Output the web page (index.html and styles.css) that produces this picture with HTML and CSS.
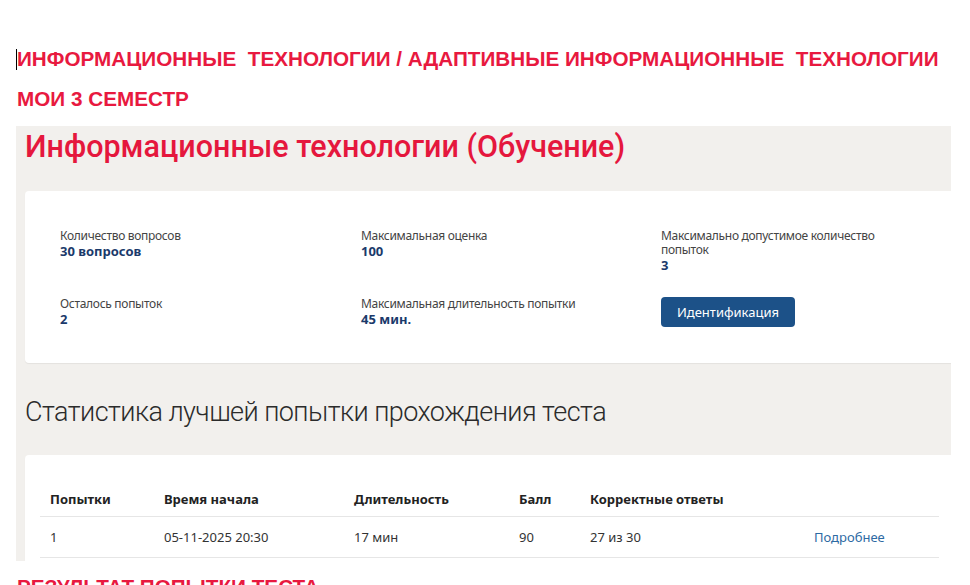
FILE: index.html
```html
<!DOCTYPE html>
<html lang="ru">
<head>
    <meta charset="UTF-8">
    <meta name="viewport" content="width=device-width, initial-scale=1.0">
    <title>Информационные технологии (Обучение)</title>
    <link rel="stylesheet" href="styles.css">
</head>
<body>
    <div class="crumbs">
        <div class="crumb-line"><span class="caret"></span>ИНФОРМАЦИОННЫЕ&nbsp; ТЕХНОЛОГИИ / АДАПТИВНЫЕ ИНФОРМАЦИОННЫЕ&nbsp; ТЕХНОЛОГИИ</div>
        <div class="crumb-line">МОИ 3 СЕМЕСТР</div>
    </div>

    <div class="quiz-panel">
        <h1 class="quiz-title">Информационные технологии (Обучение)</h1>

        <div class="card info-card">
            <div class="info-grid">
                <div class="info-item">
                    <div class="info-label">Количество вопросов</div>
                    <div class="info-value">30 вопросов</div>
                </div>
                <div class="info-item">
                    <div class="info-label">Максимальная оценка</div>
                    <div class="info-value">100</div>
                </div>
                <div class="info-item">
                    <div class="info-label">Максимально допустимое количество попыток</div>
                    <div class="info-value">3</div>
                </div>
                <div class="info-item">
                    <div class="info-label">Осталось попыток</div>
                    <div class="info-value">2</div>
                </div>
                <div class="info-item">
                    <div class="info-label">Максимальная длительность попытки</div>
                    <div class="info-value">45 мин.</div>
                </div>
                <div class="info-item">
                    <button class="btn-primary" type="button">Идентификация</button>
                </div>
            </div>
        </div>

        <h2 class="section-title">Статистика лучшей попытки прохождения теста</h2>

        <div class="card table-card">
            <table class="attempts">
                <thead>
                    <tr>
                        <th class="col-num">Попытки</th>
                        <th class="col-start">Время начала</th>
                        <th class="col-dur">Длительность</th>
                        <th class="col-score">Балл</th>
                        <th class="col-correct">Корректные ответы</th>
                        <th></th>
                    </tr>
                </thead>
                <tbody>
                    <tr>
                        <td>1</td>
                        <td>05-11-2025 20:30</td>
                        <td>17 мин</td>
                        <td>90</td>
                        <td>27 из 30</td>
                        <td><a href="#" class="more-link">Подробнее</a></td>
                    </tr>
                    <tr>
                        <td>&nbsp;</td>
                        <td></td>
                        <td></td>
                        <td></td>
                        <td></td>
                        <td></td>
                    </tr>
                </tbody>
            </table>
        </div>
    </div>

    <div class="crumb-line result-title">РЕЗУЛЬТАТ ПОПЫТКИ ТЕСТА</div>
</body>
</html>
```

FILE: styles.css
```css
body {
    margin: 0;
    background-color: #fff;
    font-family: "Noto Sans", "Open Sans", sans-serif;
    color: #333;
}

/* red breadcrumb lines on top */
.crumbs {
    margin-top: 39px;
}
.crumb-line {
    padding-left: 17px;
    font-family: "Liberation Sans", Arial, sans-serif;
    font-weight: bold;
    font-size: 20.7px;
    line-height: 40px;
    color: #e8193f;
    white-space: nowrap;
}
.caret {
    display: inline-block;
    width: 0;
    height: 21px;
    margin-left: -1px;
    border-left: 1px solid #000;
    vertical-align: -4px;
}

/* grey quiz panel */
.quiz-panel {
    margin: 7px 0 0 16px;
    width: 926px;
    height: 435px;
    padding-left: 9px;
    background-color: #f2f0ed;
    overflow: hidden;
}
.quiz-title {
    margin: 0;
    padding-top: 1px;
    font-family: Roboto, sans-serif;
    font-weight: 500;
    font-size: 30.5px;
    line-height: 40px;
    color: #e5173d;
}
.card {
    width: 929px;
    background-color: #fff;
    border-radius: 4px;
    box-shadow: 0 1px 1px rgba(0, 0, 0, 0.06);
}
.info-card {
    margin-top: 24px;
    padding: 38px 0 36px 35px;
    box-sizing: border-box;
}
.info-grid {
    display: grid;
    grid-template-columns: 301px 300px 230px;
    row-gap: 24px;
}
.info-label {
    font-size: 12px;
    line-height: 14px;
    letter-spacing: -0.3px;
    color: #444;
}
.info-value {
    font-size: 13px;
    font-weight: bold;
    line-height: 16px;
    color: #1b3a6b;
}
.btn-primary {
    width: 134px;
    height: 30px;
    padding: 0;
    border: none;
    border-radius: 4px;
    background-color: #1c5188;
    color: #fff;
    font-family: "Noto Sans", sans-serif;
    font-size: 13px;
    cursor: pointer;
}

.section-title {
    margin: 0;
    padding-top: 29px;
    font-family: Roboto, sans-serif;
    font-weight: 300;
    font-size: 27px;
    letter-spacing: -0.55px;
    line-height: 40px;
    color: #2b2b2b;
}

/* best attempt table */
.table-card {
    margin-top: 23px;
    padding: 21px 15px 0 15px;
    box-sizing: border-box;
}
.attempts {
    width: 899px;
    border-collapse: collapse;
    table-layout: fixed;
    font-size: 13px;
}
.attempts th,
.attempts td {
    box-sizing: border-box;
    text-align: left;
    border-bottom: 1px solid #e6e6e6;
}
.attempts th {
    height: 40px;
    padding: 0 10px 8px;
    vertical-align: bottom;
    line-height: 18px;
    font-weight: bold;
    color: #222;
}
.attempts td {
    height: 41px;
    padding: 0 10px;
    color: #333;
}
.col-num { width: 114px; }
.col-start { width: 190px; }
.col-dur { width: 165px; }
.col-score { width: 71px; }
.col-correct { width: 224px; }
.more-link {
    color: #2d6aa3;
    text-decoration: none;
}

.result-title {
    margin-top: 6px;
}
```
